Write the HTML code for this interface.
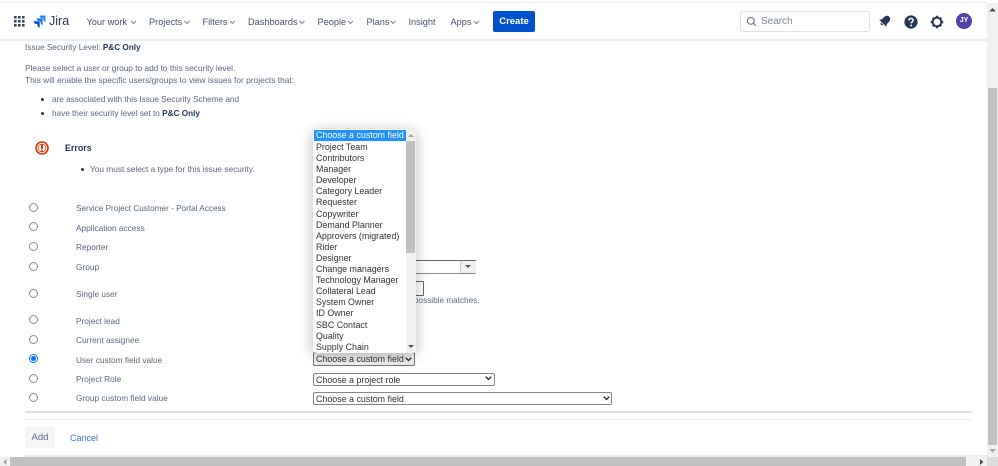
<!DOCTYPE html>
<html><head><meta charset="utf-8"><style>
html,body{margin:0;padding:0;width:998px;height:466px;overflow:hidden;background:#fff}
#r{position:relative;width:998px;height:466px;overflow:hidden;font-family:"Liberation Sans",sans-serif;filter:blur(.3px)}
#r div,#r span.a,#r svg{position:absolute}
.t{white-space:nowrap;font-size:8.3px;line-height:12px;color:#5a6781}
.t b{color:#253858}
.n{top:15.5px;white-space:nowrap;font-size:9.2px;line-height:13px;color:#42526e}
.rd{width:7px;height:7px;border:1px solid #8c8c8c;border-radius:50%;left:28.5px;background:#fff}
.i{left:316px;white-space:nowrap;font-size:8.9px;line-height:11px;color:#333}
.s{left:313px;box-sizing:border-box;border:1px solid #858585;border-radius:2px;background:#fff;font-size:8.9px;line-height:12px;color:#333;padding-left:2px;white-space:nowrap}
</style></head><body><div id="r">
<div style="left:0;top:2px;width:987px;height:1px;background:#ebecf0"></div>
<div style="left:0;top:39px;width:987px;height:2px;background:#ebecf0"></div>

<svg style="left:14px;top:16px" width="11" height="11" viewBox="0 0 11 11" fill="#344563"><rect x="0" y="0" width="2.6" height="2.6"/><rect x="4" y="0" width="2.6" height="2.6"/><rect x="8" y="0" width="2.6" height="2.6"/><rect x="0" y="4" width="2.6" height="2.6"/><rect x="4" y="4" width="2.6" height="2.6"/><rect x="8" y="4" width="2.6" height="2.6"/><rect x="0" y="8" width="2.6" height="2.6"/><rect x="4" y="8" width="2.6" height="2.6"/><rect x="8" y="8" width="2.6" height="2.6"/></svg>
<svg style="left:33px;top:15px" width="13" height="13" viewBox="0 0 13 13" fill="#2684ff"><path d="M12.5.5H6.6c0 1.5 1.2 2.7 2.7 2.700h1.100v1c0 1.500 1.200 2.700 2.100 2.700z"/><path d="M9.6 3.400H3.700c0 1.500 1.200 2.700 2.700 2.700h1.100v1.100c0 1.500 1.200 2.700 2.100 2.700z" fill="#1a72e8"/><path d="M6.700 6.300H.6c0 1.500 1.200 2.700 2.700 2.700h1.100v1.100c0 1.500 1.200 2.400 2.300 2.400z" fill="#0052cc"/></svg>
<div class="n" style="left:49px;top:14px;font-size:12.5px;line-height:15px;color:#253858">Jira</div>

<div class="n" style="left:86.500px">Your work</div>
<div class="n" style="left:149px">Projects</div>
<div class="n" style="left:202.500px">Filters</div>
<div class="n" style="left:248px">Dashboards</div>
<div class="n" style="left:317.500px">People</div>
<div class="n" style="left:366.500px">Plans</div>
<div class="n" style="left:408.500px">Insight</div>
<div class="n" style="left:450.500px">Apps</div>
<svg style="left:0;top:0" width="500" height="40" fill="none" stroke="#7a869a" stroke-width="1"><path d="M131 21l2.500 2.500 2.500-2.500M184.500 21l2.500 2.500 2.500-2.500M230 21l2.500 2.500 2.500-2.500M299.500 21l2.500 2.500 2.500-2.500M348 21l2.500 2.500 2.500-2.500M390.500 21l2.500 2.500 2.500-2.500M474 21l2.500 2.500 2.500-2.500"/></svg>

<div style="left:493px;top:11px;width:42px;height:21px;background:#0052cc;border-radius:2px;color:#fff;font-size:9.500px;font-weight:bold;line-height:21px;text-align:center">Create</div>

<div style="left:740px;top:11px;width:130px;height:21px;box-sizing:border-box;border:1px solid #dfe1e6;border-radius:3px;background:#fff"></div>
<svg style="left:746px;top:16px" width="11" height="11" viewBox="0 0 11 11" fill="none" stroke="#6b778c" stroke-width="1.1"><circle cx="4.8" cy="4.8" r="3.4"/><path d="M7.3 7.3l2.6 2.6"/></svg>
<div class="n" style="left:761px;top:14.500px;color:#7a869a;font-size:10px">Search</div>

<svg style="left:878px;top:14px" width="14" height="14" viewBox="0 0 14 14" fill="#253858"><g transform="rotate(45 7 7)"><path d="M7 1C4.600 1 3.600 3 3.600 5.500V8L2 10.200H12L10.400 8V5.500C10.400 3 9.400 1 7 1z"/><path d="M5.500 11a1.500 1.500 0 0 0 3 0z"/></g></svg>
<svg style="left:904px;top:15px" width="14" height="14" viewBox="0 0 14 14"><circle cx="7" cy="7" r="6.600" fill="#253858"/><path d="M4.900 5.400C5 4.200 5.900 3.500 7.100 3.500c1.200 0 2.100.8 2.100 1.800 0 1.500-2.100 1.500-2.100 3.100" fill="none" stroke="#fff" stroke-width="1.500"/><circle cx="7.100" cy="10.400" r=".95" fill="#fff"/></svg>
<svg style="left:930px;top:15px" width="14" height="14" viewBox="0 0 14 14"><circle cx="7" cy="7" r="4.300" fill="none" stroke="#253858" stroke-width="1.900"/><path d="M5.800.8h2.400v2H5.800zM5.800 11.200h2.400v2H5.800zM.8 5.800h2v2.400h-2zM11.200 5.800h2v2.400h-2zM2 3.600L3.600 2l1.400 1.400-1.600 1.600zM9 10.600l1.600-1.600 1.400 1.400-1.600 1.600zM2 10.400l1.400-1.400 1.600 1.600L3.600 12zM9 3.400L10.400 2 12 3.600l-1.400 1.400z" fill="#253858"/></svg>
<div style="left:956px;top:13px;width:16px;height:16px;border-radius:50%;background:#5243aa;color:#fff;font-size:7px;font-weight:bold;line-height:16px;text-align:center">JY</div>

<div class="t" style="left:25px;top:42px;font-size:8.200px">Issue Security Level: <b>P&amp;C Only</b></div>
<div class="t" style="left:25px;top:62px">Please select a user or group to add to this security level.</div>
<div class="t" style="left:25px;top:74px;font-size:8.400px">This will enable the specific users/groups to view issues for projects that:</div>
<div style="left:41px;top:98px;width:3px;height:3px;border-radius:50%;background:#253858"></div>
<div class="t" style="left:52px;top:94px;font-size:8.200px">are associated with this Issue Security Scheme and</div>
<div style="left:41px;top:112px;width:3px;height:3px;border-radius:50%;background:#253858"></div>
<div class="t" style="left:52px;top:108px;font-size:8.200px">have their security level set to <b>P&amp;C Only</b></div>

<svg style="left:35px;top:141px" width="14" height="14" viewBox="0 0 14 14"><circle cx="7" cy="7" r="6" fill="none" stroke="#de350b" stroke-width="1.600"/><circle cx="7" cy="7" r="3.900" fill="none" stroke="#de350b" stroke-width=".8"/><rect x="6" y="3.300" width="2" height="5" rx=".8" fill="#de350b"/><circle cx="7" cy="9.900" r="1" fill="#de350b"/></svg>
<div class="t" style="left:65px;top:142px;font-weight:bold;color:#253858;font-size:8.900px">Errors</div>
<div style="left:81px;top:168px;width:3px;height:3px;border-radius:50%;background:#253858"></div>
<div class="t" style="left:90px;top:163px">You must select a type for this issue security.</div>

<div class="rd" style="top:202.500px"></div><div class="t" style="left:76px;top:203px;font-size:8.200px">Service Project Customer - Portal Access</div>
<div class="rd" style="top:222px"></div><div class="t" style="left:76px;top:222px">Application access</div>
<div class="rd" style="top:241.500px"></div><div class="t" style="left:76px;top:241px">Reporter</div>
<div class="rd" style="top:261.500px"></div><div class="t" style="left:76px;top:261px">Group</div>
<div class="rd" style="top:288.500px"></div><div class="t" style="left:76px;top:288px">Single user</div>
<div class="rd" style="top:315px"></div><div class="t" style="left:76px;top:315px">Project lead</div>
<div class="rd" style="top:334.500px"></div><div class="t" style="left:76px;top:334px">Current assignee</div>
<div class="rd" style="top:354px;border-color:#0075ff"></div><div style="left:30.500px;top:356px;width:5px;height:5px;border-radius:50%;background:#0075ff"></div><div class="t" style="left:76px;top:354px">User custom field value</div>
<div class="rd" style="top:373.500px"></div><div class="t" style="left:76px;top:373px">Project Role</div>
<div class="rd" style="top:393px"></div><div class="t" style="left:76px;top:392px">Group custom field value</div>

<div style="left:400px;top:260px;width:76px;height:14px;box-sizing:border-box;border:1px solid #8a8a8a;border-top-color:#666;background:#fff;border-radius:1px"></div>
<div style="left:460px;top:261px;width:15px;height:12px;background:#f0f0f0;border-left:1px solid #ccc"></div>
<svg style="left:465px;top:265px" width="6" height="4"><path d="M0 0h6L3 3z" fill="#555"/></svg>
<div style="left:400px;top:281px;width:24px;height:15px;box-sizing:border-box;border:1px solid #666;border-radius:1px;background:#fff"></div>
<div class="t" style="left:414px;top:295px;font-size:8.200px">possible matches.</div>

<div class="s" style="top:352px;width:102px;height:14px;background:#efefef;border-color:#777">Choose a custom field</div>
<svg style="left:405px;top:357px" width="7" height="5" fill="none" stroke="#222" stroke-width="1.300"><path d="M.7.700L3.500 3.500 6.300.700"/></svg>
<div class="s" style="top:372.500px;width:182px;height:13px">Choose a project role</div>
<svg style="left:485px;top:376px" width="7" height="5" fill="none" stroke="#222" stroke-width="1.300"><path d="M.7.700L3.500 3.500 6.300.700"/></svg>
<div class="s" style="top:392px;width:299px;height:13px">Choose a custom field</div>
<svg style="left:603px;top:396px" width="7" height="5" fill="none" stroke="#222" stroke-width="1.300"><path d="M.7.700L3.500 3.500 6.300.700"/></svg>

<div style="left:313px;top:129px;width:103px;height:224px;background:#fff;border-radius:4px;box-shadow:0 2px 14px rgba(0,0,0,.28);overflow:hidden">
  <div style="left:1px;top:1px;width:92px;height:11px;background:#1e90ff"></div>
  <div style="left:93px;top:0;width:10px;height:224px;background:#f1f1f1"></div>
  <div style="left:93px;top:12px;width:9px;height:112px;background:#c1c1c1"></div>
  <svg style="left:95px;top:5px" width="6" height="4"><path d="M3 0l3 3H0z" fill="#a3a3a3"/></svg>
  <svg style="left:95px;top:216px" width="6" height="4"><path d="M0 0h6L3 3z" fill="#505050"/></svg>
</div>
<div class="i" style="top:130px;color:#fff">Choose a custom field</div>
<div class="i" style="top:142px">Project Team</div>
<div class="i" style="top:153px">Contributors</div>
<div class="i" style="top:164px">Manager</div>
<div class="i" style="top:175px">Developer</div>
<div class="i" style="top:186px">Category Leader</div>
<div class="i" style="top:197px">Requester</div>
<div class="i" style="top:209px">Copywriter</div>
<div class="i" style="top:220px">Demand Planner</div>
<div class="i" style="top:231px">Approvers (migrated)</div>
<div class="i" style="top:242px">Rider</div>
<div class="i" style="top:253px">Designer</div>
<div class="i" style="top:264px">Change managers</div>
<div class="i" style="top:275px">Technology Manager</div>
<div class="i" style="top:286px">Collateral Lead</div>
<div class="i" style="top:297px">System Owner</div>
<div class="i" style="top:308px">ID Owner</div>
<div class="i" style="top:320px">SBC Contact</div>
<div class="i" style="top:331px">Quality</div>
<div class="i" style="top:342px">Supply Chain</div>

<div style="left:25px;top:411px;width:947px;height:2px;background:#dfe1e6"></div>
<div style="left:25px;top:419px;width:947px;height:1px;background:#ebecf0"></div>
<div style="left:25px;top:427px;width:30px;height:21px;border-radius:2px;background:#f4f5f7;color:#5e6c84;font-size:9.500px;line-height:22px;text-align:center">Add</div>
<div class="t" style="left:70px;top:432px;color:#3a78d6;font-size:9px">Cancel</div>
<div style="left:25px;top:455px;width:962px;height:2px;background:#ebecf0"></div>

<div style="left:987px;top:3px;width:11px;height:454px;background:#f1f1f1"></div>
<div style="left:988px;top:88px;width:9px;height:357px;background:#c1c1c1"></div>
<svg style="left:989px;top:8px" width="7" height="4"><path d="M3.500 0L7 3.500H0z" fill="#505050"/></svg>
<svg style="left:989px;top:449px" width="7" height="4"><path d="M0 0h7L3.500 3.500z" fill="#a3a3a3"/></svg>
<div style="left:0;top:457px;width:987px;height:9px;background:#f1f1f1"></div>
<div style="left:10px;top:457px;width:956px;height:9px;background:#c1c1c1"></div>
<svg style="left:3px;top:459px" width="4" height="6"><path d="M0 3l3.500-3v6z" fill="#a3a3a3"/></svg>
<svg style="left:980px;top:459px" width="4" height="6"><path d="M0 0l3.500 3L0 6z" fill="#505050"/></svg>
<div style="left:987px;top:457px;width:11px;height:9px;background:#dcdcdc"></div>
</div></body></html>
